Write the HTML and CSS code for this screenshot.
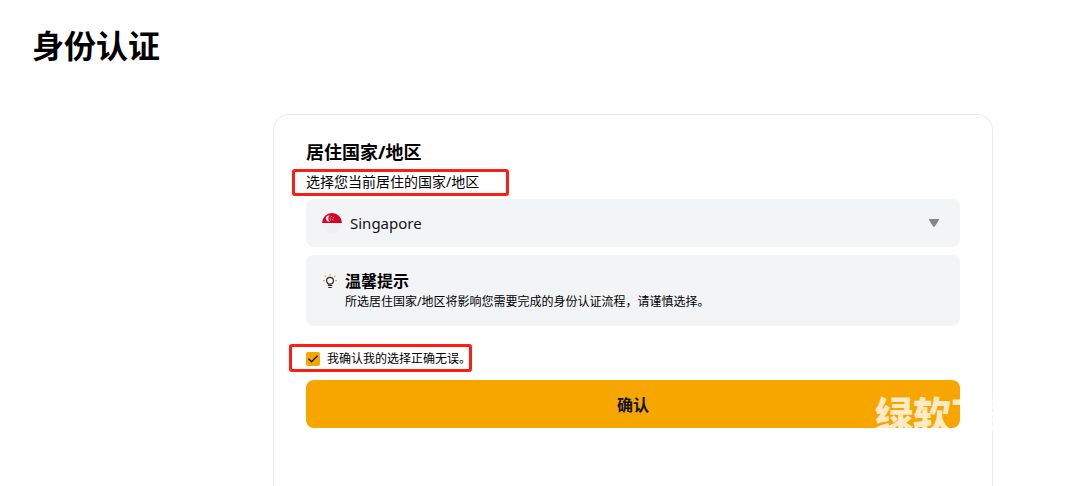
FILE: index.html
```
<!DOCTYPE html>
<html lang="zh-CN">
<head>
  <meta charset="UTF-8" />
  <meta name="viewport" content="width=device-width, initial-scale=1.0"/>
  <title>身份认证</title>
  <link rel="stylesheet" href="styles.css">
</head>
<body>
  <main class="page">
    <h1>身份认证</h1>

    <form class="card" id="regionForm">
      <h2>居住国家/地区</h2>
      <label class="subtitle marked" for="country">选择您当前居住的国家/地区</label>

      <div class="select-box">
        <svg class="flag" viewBox="0 0 20 20" aria-hidden="true">
          <circle cx="10" cy="10" r="10" fill="#f0f0f0"/>
          <path d="M0 10a10 10 0 0 1 20 0z" fill="#d80027"/>
          <path d="M8 2.6a3.1 3.1 0 1 0 0 5.8 3.3 3.3 0 0 1 0-5.8z" fill="#f0f0f0"/>
          <g fill="#f0f0f0">
            <circle cx="9.6" cy="3.6" r=".5"/>
            <circle cx="11.4" cy="4.8" r=".5"/>
            <circle cx="8.1" cy="4.9" r=".5"/>
            <circle cx="8.7" cy="6.8" r=".5"/>
            <circle cx="10.7" cy="6.8" r=".5"/>
          </g>
        </svg>
        <select id="country">
          <option>Singapore</option>
        </select>
        <svg class="arrow" viewBox="0 0 12 8" aria-hidden="true">
          <path d="M1.8 0h8.4q1.4 0 .6 1.2L7 7.2q-1 1.2-2 0L1.2 1.2Q.4 0 1.8 0z" fill="#81858c"/>
        </svg>
      </div>

      <div class="tip">
        <svg class="bulb" viewBox="0 0 16 16" fill="none" aria-hidden="true">
          <circle cx="8" cy="7.8" r="3.4" stroke="#25282c" stroke-width="1.2"/>
          <path d="M5.8 12.5h4.4M6.3 14.5h3.4" stroke="#25282c" stroke-width="1.1"/>
          <path d="M8 1v1.8M2.6 2.6l1.3 1.3M13.4 2.6l-1.3 1.3M1 7.7h1.9M13.1 7.7H15" stroke="#f7a600" stroke-width="1.3"/>
        </svg>
        <div>
          <h3>温馨提示</h3>
          <p>所选居住国家/地区将影响您需要完成的身份认证流程，请谨慎选择。</p>
        </div>
      </div>

      <label class="confirm marked">
        <input type="checkbox" checked>
        我确认我的选择正确无误。
      </label>

      <div class="submit-row">
        <button type="submit">确认</button>
        <span class="watermark" aria-hidden="true">绿软下载</span>
      </div>
    </form>
  </main>
</body>
</html>
```
FILE: styles.css
```
* {
  box-sizing: border-box;
}
html, body {
  height: 100%;
}
body {
  margin: 0;
  font-family: "Noto Sans", "Noto Sans CJK SC", sans-serif;
  background: #fff;
  color: #000;
}
h1, h2, h3, p {
  margin: 0;
}
.page {
  display: flex;
  flex-direction: column;
  min-height: 100%;
}
h1 {
  padding: 22px 32px 0;
  font-size: 32px;
  line-height: 48px;
}
.card {
  flex: 1;
  display: flex;
  flex-direction: column;
  align-items: stretch;
  max-width: 1000px;
  margin: 44px 89px 0 273px;
  padding: 24px 32px 0;
  border: 1px solid #eaecf2;
  border-bottom: 0;
  border-radius: 16px 16px 0 0;
}
h2 {
  font-size: 18px;
  line-height: 26px;
}
.marked {
  position: relative;
  align-self: flex-start;
}
/* red highlight frame */
.marked::after {
  content: "";
  position: absolute;
  border: 3px solid #fa1e14;
  border-radius: 3px;
  pointer-events: none;
}
.subtitle {
  margin: 4px 0;
  font-size: 14px;
  line-height: 26px;
}
.subtitle::after {
  inset: 0 -30px -1px -14px;
}
.select-box {
  display: flex;
  align-items: center;
  height: 48px;
  padding: 0 20px 0 16px;
  background: #f3f4f6;
  border-radius: 8px;
}
.flag {
  width: 20px;
  height: 20px;
}
.select-box select {
  flex: 1;
  height: 48px;
  padding: 0 0 0 8px;
  border: 0;
  outline: 0;
  appearance: none;
  background: transparent;
  font-family: "Noto Sans", sans-serif;
  font-size: 15px;
  color: #121214;
}
.arrow {
  width: 12px;
  height: 8px;
}
.tip {
  display: flex;
  gap: 7px;
  margin-top: 8px;
  padding: 15px 16px 14px;
  background: #f3f4f6;
  border-radius: 8px;
}
.bulb {
  width: 16px;
  height: 16px;
  margin-top: 3px;
}
h3 {
  font-size: 16px;
  line-height: 22px;
}
.tip p {
  font-size: 12px;
  line-height: 20px;
}
.confirm {
  display: flex;
  align-items: center;
  gap: 7px;
  margin: 22px 0 10px;
  font-size: 12px;
  line-height: 22px;
}
.confirm::after {
  inset: -4px -1px -2px -17px;
}
.confirm input {
  width: 14px;
  height: 14px;
  margin: 0;
  appearance: none;
  border-radius: 2px;
  background: #f7a600 url("data:image/svg+xml,%3Csvg xmlns='http://www.w3.org/2000/svg' viewBox='0 0 14 14'%3E%3Cpath d='M2.5 6.8l3 3 6-6' fill='none' stroke='%23121214' stroke-width='1.3'/%3E%3C/svg%3E") center / 14px no-repeat;
}
.submit-row {
  position: relative;
}
.submit-row button {
  width: 100%;
  height: 48px;
  border: 0;
  border-radius: 8px;
  background: #f7a600;
  color: #121214;
  font-family: "Noto Sans CJK SC", sans-serif;
  font-size: 16px;
  font-weight: 700;
}
.watermark {
  position: absolute;
  top: 10px;
  left: calc(100% - 85px);
  font-size: 38px;
  font-weight: 900;
  line-height: 48px;
  color: rgba(255, 255, 255, 0.8);
  white-space: nowrap;
  pointer-events: none;
}
```
